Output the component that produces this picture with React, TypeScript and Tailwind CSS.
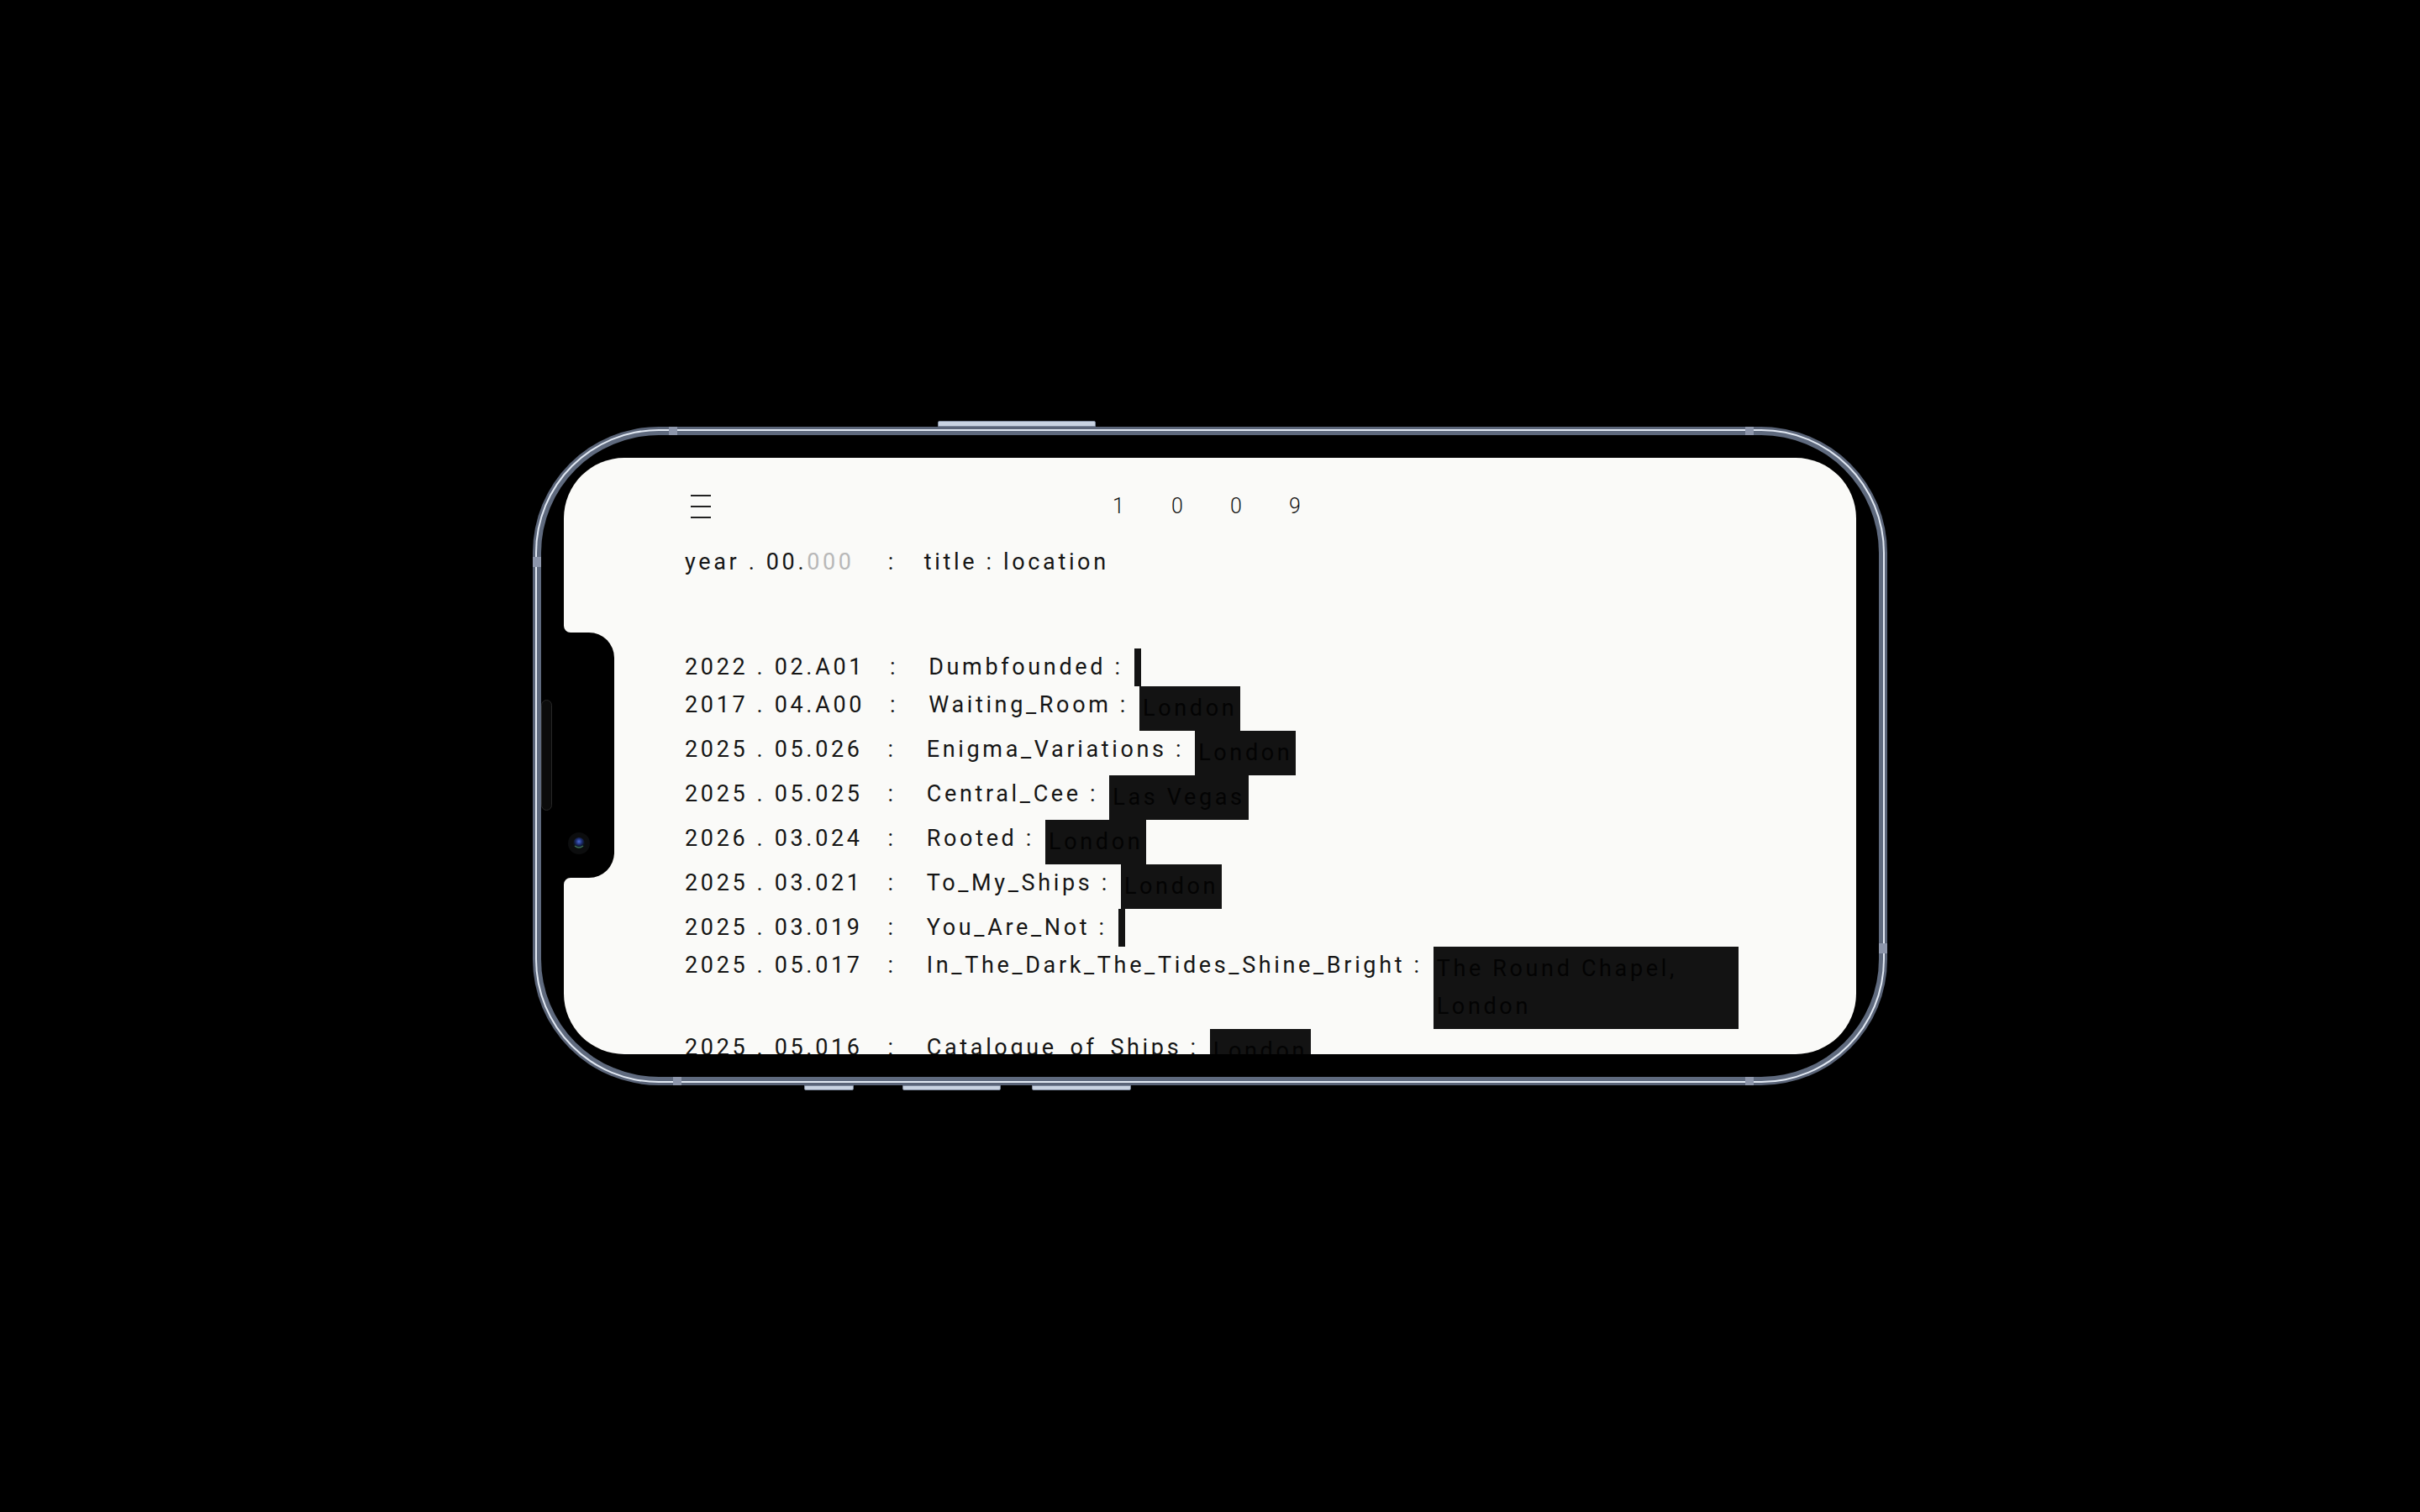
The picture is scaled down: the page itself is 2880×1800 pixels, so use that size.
import React from "react";

type Entry = {
  date: string;
  title: string;
  loc: string;
};

const entries: Entry[] = [
  { date: "2022 . 02.A01", title: "Dumbfounded", loc: "" },
  { date: "2017 . 04.A00", title: "Waiting_Room", loc: "London" },
  { date: "2025 . 05.026", title: "Enigma_Variations", loc: "London" },
  { date: "2025 . 05.025", title: "Central_Cee", loc: "Las Vegas" },
  { date: "2026 . 03.024", title: "Rooted", loc: "London" },
  { date: "2025 . 03.021", title: "To_My_Ships", loc: "London" },
  { date: "2025 . 03.019", title: "You_Are_Not", loc: "" },
  {
    date: "2025 . 05.017",
    title: "In_The_Dark_The_Tides_Shine_Bright",
    loc: "The Round Chapel, London",
  },
  { date: "2025 . 05.016", title: "Catalogue_of_Ships", loc: "London" },
];

export default function App() {
  return (
    <div className="flex h-[1800px] w-[2880px] items-center justify-center bg-black">
      <Phone>
        <Screen />
      </Phone>
    </div>
  );
}

function Phone({ children }: { children: React.ReactNode }) {
  return (
    <div className="relative h-[784px] w-[1612px]">
      {/* side buttons */}
      <span className="absolute left-[482px] top-[-7px] h-[7px] w-[188px] rounded-t-[2px] border border-[#7d889c] bg-[#c9d3e2]" />
      <span className="absolute left-[323px] top-[784px] h-[6px] w-[59px] rounded-b-[2px] border border-[#7d889c] bg-[#c9d3e2]" />
      <span className="absolute left-[440px] top-[784px] h-[6px] w-[117px] rounded-b-[2px] border border-[#7d889c] bg-[#c9d3e2]" />
      <span className="absolute left-[594px] top-[784px] h-[6px] w-[118px] rounded-b-[2px] border border-[#7d889c] bg-[#c9d3e2]" />

      {/* frame */}
      <div className="h-full w-full rounded-[150px] bg-[#5a6478] p-[3px]">
        <div className="h-full w-full rounded-[147px] bg-[#e2e9f3] p-[2px]">
          <div className="h-full w-full rounded-[145px] bg-[#5f6a7e] p-[5px]">
            <div className="relative h-full w-full rounded-[140px] bg-black p-[27px]">
              <span className="absolute left-0 top-[315px] h-[132px] w-[13px] rounded-full border border-[#262626] bg-[#0b0b0b]" />
              {children}
            </div>
          </div>
        </div>
      </div>

      {/* antenna bands */}
      <span className="absolute left-[162px] top-0 h-[10px] w-[10px] bg-[#8d96ab]" />
      <span className="absolute left-[1443px] top-0 h-[10px] w-[10px] bg-[#8d96ab]" />
      <span className="absolute left-[167px] top-[774px] h-[10px] w-[10px] bg-[#8d96ab]" />
      <span className="absolute left-[1443px] top-[774px] h-[10px] w-[10px] bg-[#8d96ab]" />
      <span className="absolute left-0 top-[155px] h-[12px] w-[10px] bg-[#8d96ab]" />
      <span className="absolute right-0 top-[615px] h-[12px] w-[10px] bg-[#8d96ab]" />
    </div>
  );
}

function Screen() {
  return (
    <div className="relative h-full w-full overflow-hidden rounded-[72px] bg-[#fafaf8] font-['Roboto','Liberation_Sans',sans-serif] text-[#151515]">
      {/* top bar */}
      <div className="pt-[38px]">
        <div className="grid h-[40px] grid-cols-[1fr_auto_1fr] items-center">
          <div className="pl-[151px]">
            <div className="flex w-[24px] flex-col gap-[11px]">
              <span className="h-[2px] w-[24px] bg-[#222]" />
              <span className="h-[2px] w-[24px] bg-[#222]" />
              <span className="h-[2px] w-[24px] bg-[#222]" />
            </div>
          </div>
          <div className="flex pr-[8px] text-[25px] font-light text-[#111]">
            {["1", "0", "0", "9"].map((d, i) => (
              <span key={i} className="w-[70px] text-center">
                {d}
              </span>
            ))}
          </div>
          <div />
        </div>
      </div>

      {/* list */}
      <div className="pl-[144px] pr-[140px] text-[27px] tracking-[0.135em]">
        <div className="mt-[24px] flex items-start leading-[45px]">
          <span className="shrink-0 whitespace-pre">
            year . 00.<span className="text-[#b8b8b8]">000</span>
          </span>
          <span className="ml-[40px] mr-[33px] shrink-0">:</span>
          <span className="shrink-0 whitespace-pre">title : location</span>
        </div>

        <div className="mt-[80px] flex flex-col">
          {entries.map((e) => (
            <Row key={e.date + e.title} entry={e} />
          ))}
        </div>
      </div>

      <Notch />
    </div>
  );
}

function Row({ entry }: { entry: Entry }) {
  return (
    <div className="flex items-start">
      <span className="shrink-0 whitespace-pre leading-[45px]">{entry.date}</span>
      <span className="ml-[30px] mr-[36px] shrink-0 leading-[45px]">:</span>
      <span className="shrink-0 whitespace-pre leading-[45px]">{entry.title} :</span>
      {entry.loc ? (
        <span className="ml-[13px] min-w-0 bg-[#131313] px-[4px] py-[4px] leading-[45px] text-[#030303]">
          {entry.loc}
        </span>
      ) : (
        <span className="ml-[13px] h-[45px] w-[8px] shrink-0 bg-[#131313]" />
      )}
    </div>
  );
}

// Landscape notch on the left edge, with the front camera in it.
function Notch() {
  return (
    <svg
      className="absolute left-0 top-[200px]"
      width="60"
      height="308"
      viewBox="0 0 60 308"
    >
      <defs>
        <radialGradient id="lens" cx="50%" cy="35%" r="60%">
          <stop offset="0%" stopColor="#4a6bd8" />
          <stop offset="45%" stopColor="#1b2a6a" />
          <stop offset="75%" stopColor="#0d1420" />
          <stop offset="100%" stopColor="#0a0f0c" />
        </radialGradient>
      </defs>
      <path
        d="M0 0 A8 8 0 0 0 8 8 L30 8 A30 30 0 0 1 60 38 L60 270 A30 30 0 0 1 30 300 L8 300 A8 8 0 0 0 0 308 Z"
        fill="#000"
      />
      <circle cx="18" cy="259" r="13" fill="#0c0d0e" />
      <circle cx="18" cy="259" r="7" fill="url(#lens)" />
      <path d="M13 262 Q18 266 23 262" stroke="#3c6a52" strokeWidth="1.5" fill="none" />
    </svg>
  );
}
